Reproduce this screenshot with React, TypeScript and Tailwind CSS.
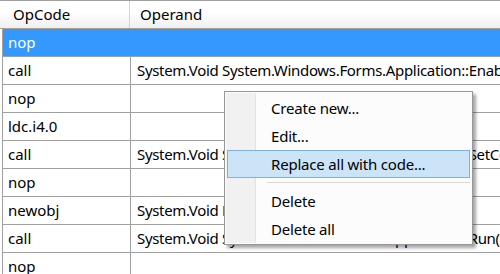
import React from "react";

const rows = [
  { op: "nop", arg: "", selected: true },
  { op: "call", arg: "System.Void System.Windows.Forms.Application::EnableVisualStyles()" },
  { op: "nop", arg: "" },
  { op: "ldc.i4.0", arg: "" },
  { op: "call", arg: "System.Void System.Windows.Forms.Application::SetCompatibleTextRenderingDefault(System.Boolean)" },
  { op: "nop", arg: "" },
  { op: "newobj", arg: "System.Void Patcher.Form1::.ctor()" },
  { op: "call", arg: "System.Void System.Windows.Forms.Application::Run(System.Windows.Forms.Form)" },
  { op: "nop", arg: "" },
];

function MenuItem({ label, active }: { label: string; active?: boolean }) {
  return (
    <div
      className={
        "h-[28px] flex items-center pl-[43px] tracking-[-0.2px] " +
        (active ? "bg-[#cce4f8] border border-[#7eb0e6]" : "border border-transparent")
      }
    >
      {label}
    </div>
  );
}

export default function App() {
  return (
    <div
      className="relative w-[500px] h-[274px] overflow-hidden bg-white text-[15px] text-black"
      style={{ fontFamily: '"Noto Sans", "Segoe UI", sans-serif' }}
    >
      {/* header */}
      <div className="flex h-[29px] border-t border-b border-[#a0a0a0] bg-gradient-to-b from-white from-40% to-[#f0f0f0]">
        <div className="w-[130px] border-r border-[#d5d5d5] pl-[13px] flex items-center">OpCode</div>
        <div className="flex-1 pl-[10px] flex items-center">Operand</div>
      </div>

      {/* rows */}
      <div className="ml-[2px] border-l border-[#a0a0a0]">
        {rows.map((r, i) => (
          <div
            key={i}
            className={
              "flex h-[28px] border-b border-[#a0a0a0] whitespace-nowrap " +
              (r.selected ? "bg-[#3399ff] text-white" : "")
            }
          >
            <div
              className={
                "w-[128px] shrink-0 pl-[5px] flex items-center " +
                (r.selected ? "" : "border-r border-[#a0a0a0]")
              }
            >
              {r.op}
            </div>
            <div className="flex-1 pl-[6px] flex items-center overflow-hidden tracking-[-0.32px]">{r.arg}</div>
          </div>
        ))}
      </div>

      {/* context menu */}
      <div className="absolute left-[224px] top-[91px] w-[249px] h-[154px] bg-[#fcfcfc] border border-[#979797] shadow-[3px_3px_3px_rgba(0,0,0,0.35)] p-[2px]">
        <div className="absolute left-[1px] top-[1px] bottom-[1px] w-[30px] bg-[#f1f1f1] border-r border-[#e2e3e3]" />
        <div className="relative">
          <MenuItem label="Create new..." />
          <MenuItem label="Edit..." />
          <MenuItem label="Replace all with code..." active />
          <div className="h-[9px] flex items-center pl-[40px]">
            <div className="w-full h-px bg-[#d7d7d7]" />
          </div>
          <MenuItem label="Delete" />
          <MenuItem label="Delete all" />
        </div>
      </div>
    </div>
  );
}
